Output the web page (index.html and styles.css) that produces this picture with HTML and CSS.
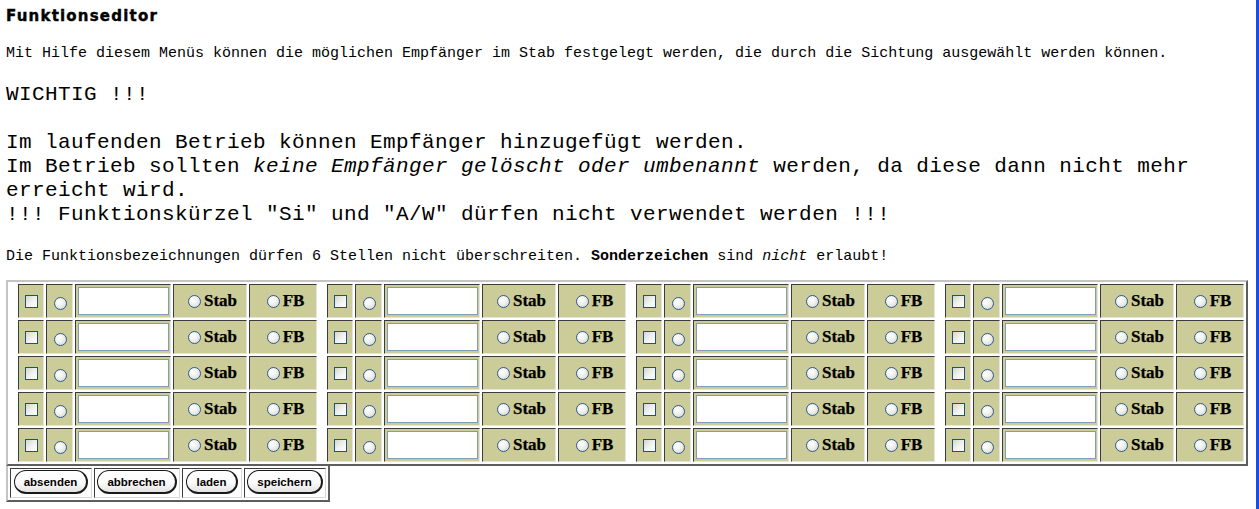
FILE: index.html
```html
<!DOCTYPE html>
<html lang="de">
<head>
<meta charset="utf-8">
<title>Funktionseditor</title>
<link rel="stylesheet" href="styles.css">
</head>
<body>
<div class="page">
  <h1 class="title">Funktionseditor</h1>
  <p class="small intro">Mit Hilfe diesem Menüs können die möglichen Empfänger im Stab festgelegt werden, die durch die Sichtung ausgewählt werden können.</p>
  <p class="big warn">WICHTIG !!!</p>
  <p class="big notes">Im laufenden Betrieb können Empfänger hinzugefügt werden.<br>Im Betrieb sollten <i>keine Empfänger gelöscht oder umbenannt</i> werden, da diese dann nicht mehr erreicht wird.<br>!!! Funktionskürzel "Si" und "A/W" dürfen nicht verwendet werden !!!</p>
  <p class="small rule">Die Funktionsbezeichnungen dürfen 6 Stellen nicht überschreiten. <b>Sonderzeichen</b> sind <i>nicht</i> erlaubt!</p>

  <form class="editor">
    <div class="grid" id="grid"></div>
    <div class="buttons">
      <div class="bcell w1"><button type="button" class="btn">absenden</button></div>
      <div class="bcell w2"><button type="button" class="btn">abbrechen</button></div>
      <div class="bcell w3"><button type="button" class="btn">laden</button></div>
      <div class="bcell w4"><button type="button" class="btn">speichern</button></div>
    </div>
  </form>
</div>
<script src="app.js"></script>
</body>
</html>
```

FILE: app.js
```js
(function () {
  var grid = document.getElementById('grid');
  var html = '';
  for (var r = 0; r < 5; r++) {
    for (var g = 0; g < 4; g++) {
      var n = r * 4 + g;
      html +=
        '<div class="cell c-check"><input type="checkbox" class="chk" name="del' + n + '"></div>' +
        '<div class="cell c-sel"><input type="radio" class="rad rad-sel" name="sel"></div>' +
        '<div class="cell c-name"><input type="text" class="txt" name="name' + n + '"></div>' +
        '<div class="cell c-opt"><label><input type="radio" class="rad" name="typ' + n + '">Stab</label></div>' +
        '<div class="cell c-opt"><label><input type="radio" class="rad" name="typ' + n + '">FB</label></div>';
    }
  }
  grid.innerHTML = html;
})();
```

FILE: styles.css
```css
html, body {
  margin: 0;
  padding: 0;
  background: #fff;
  color: #000;
}

.page {
  box-sizing: border-box;
  min-height: 100vh;
  padding: 0 0 0 6px;
  border-right: 3px solid #1c4be6;
  font-family: "Liberation Mono", "Courier New", monospace;
  overflow: hidden;
}

.title {
  margin: 8px 0 0 0;
  font-family: "DejaVu Sans", Verdana, sans-serif;
  font-weight: bold;
  font-size: 15px;
  line-height: 16px;
  letter-spacing: 1.2px;
  -webkit-text-stroke: 0.4px #000;
}

p { margin: 0; }

.small {
  font-size: 15px;
  line-height: 18px;
}

.big {
  font-size: 21px;
  letter-spacing: 0.4px;
  line-height: 24px;
}

.intro { margin-top: 21px; }
.warn { margin-top: 20px; }
.notes { margin-top: 24px; }
.rule { margin-top: 21px; }

.editor {
  margin: 14px 0 0 0;
  display: flex;
  flex-direction: column;
  align-items: flex-start;
}

.grid {
  display: grid;
  grid-template-columns: repeat(4, 34px 27px 96px 74px 68px);
  grid-auto-rows: 34px;
  gap: 2px;
  padding: 2px;
  border: 2px solid;
  border-color: #c4c4c4 #5e5e5e #5e5e5e #c4c4c4;
}

.cell {
  box-sizing: border-box;
  background: #cccc99;
  border: 1px solid;
  border-color: #3c3c3c #e4e4e4 #e4e4e4 #3c3c3c;
  display: flex;
  align-items: center;
  justify-content: center;
}

.c-check {
  width: 26px;
  justify-self: end;
}

.c-name {
  justify-content: flex-start;
  padding-left: 2px;
}

.c-opt label {
  display: flex;
  align-items: center;
  font-family: "Liberation Serif", "Times New Roman", serif;
  font-weight: bold;
  font-size: 17px;
  line-height: 20px;
  -webkit-text-stroke: 0.25px #000;
}

.chk, .rad {
  -webkit-appearance: none;
  appearance: none;
  box-sizing: border-box;
  width: 13px;
  height: 13px;
  margin: 0;
  padding: 0;
}

.chk {
  margin-left: 1px;
  border: 1px solid #1c5180;
  background: linear-gradient(135deg, #d6d6d0 0%, #f2f2f0 55%, #ffffff 100%);
}

.rad {
  border: 1px solid #2b5d8c;
  border-radius: 50%;
  background: radial-gradient(circle at 38% 35%, #ffffff 0%, #f4f4f2 35%, #d0d0ca 100%);
}

.rad-sel {
  margin: 5px 0 0 1px;
}

.c-opt .rad {
  margin: 0 3px 0 5px;
}

.txt {
  box-sizing: border-box;
  width: 91px;
  height: 28px;
  margin: 0;
  border: 1px solid #7f9db9;
  background: #fff;
  padding: 0 2px;
  font-family: "Liberation Sans", Arial, sans-serif;
  font-size: 13px;
}

.buttons {
  display: flex;
  gap: 2px;
  padding: 2px;
  border-style: solid;
  border-width: 0 2px 2px 2px;
  border-color: #c4c4c4 #5e5e5e #5e5e5e #c4c4c4;
}

.bcell {
  box-sizing: border-box;
  height: 30px;
  background: #fff;
  border: 1px solid;
  border-color: #3c3c3c #d8d8d8 #d8d8d8 #3c3c3c;
  display: flex;
  align-items: center;
  justify-content: center;
  padding-bottom: 2px;
}

.w1 { width: 82px; }
.w2 { width: 86px; }
.w3 { width: 60px; }
.w4 { width: 82px; }

.btn {
  box-sizing: border-box;
  height: 24px;
  margin: 0;
  padding: 0 9px;
  border-style: solid;
  border-width: 1px 2px 2px 1px;
  border-color: #1a1a1a;
  border-radius: 12px;
  background: linear-gradient(to bottom, #ffffff 0%, #fbfbfb 55%, #e2e2e2 100%);
  color: #000;
  font-family: "Liberation Sans", Arial, sans-serif;
  font-weight: bold;
  font-size: 11.5px;
  line-height: 20px;
  cursor: pointer;
}
```
